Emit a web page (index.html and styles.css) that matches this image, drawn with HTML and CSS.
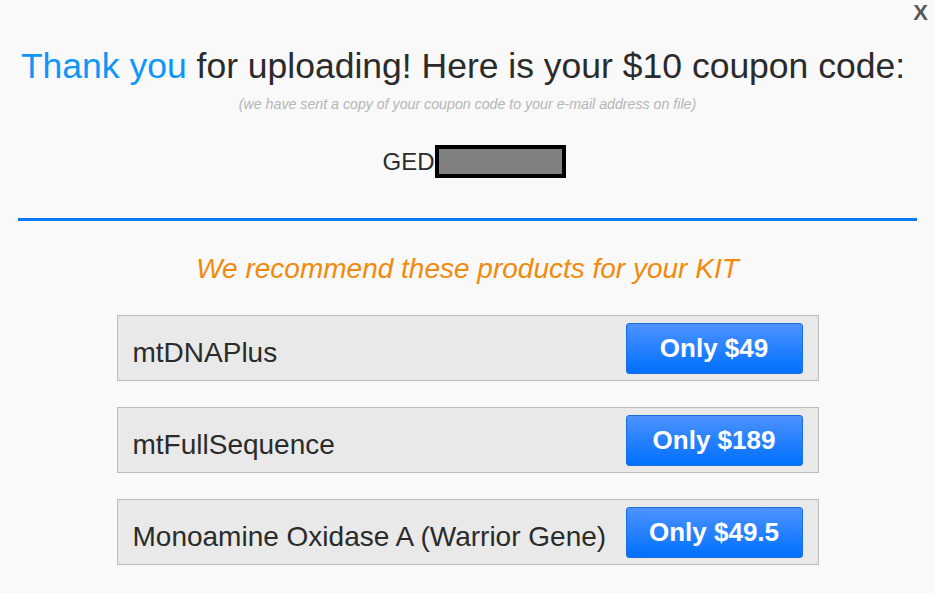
FILE: index.html
```html
<!DOCTYPE html>
<html lang="en">
<head>
    <meta charset="UTF-8">
    <title>Coupon code</title>
    <link rel="stylesheet" href="styles.css">
</head>
<body>

    <div class="popup">
        <a class="close" href="#">X</a>

        <div class="coupon">
            <h1><span class="thanks">Thank you</span> for uploading! Here is your $10 coupon code:</h1>
            <p class="note">(we have sent a copy of your coupon code to your e-mail address on file)</p>
            <div class="code">GED<span class="hidden-code"></span></div>
        </div>

        <div class="recommend">
            <h2>We recommend these products for your KIT</h2>
            <ul class="products">
                <li class="product"><span class="name">mtDNAPlus</span><a class="buy" href="#">Only $49</a></li>
                <li class="product"><span class="name">mtFullSequence</span><a class="buy" href="#">Only $189</a></li>
                <li class="product"><span class="name">Monoamine Oxidase A (Warrior Gene)</span><a class="buy" href="#">Only $49.5</a></li>
            </ul>
        </div>
    </div>

</body>
</html>
```

FILE: styles.css
```css
body {
    font-family: "Liberation Sans", Arial, sans-serif;
    background-color: #f9f9f9;
    margin: 0;
    color: #2b2b2b;
}
.popup {
    position: relative;
    width: 935px;
    height: 593px;
    overflow: hidden;
}
.close {
    position: absolute;
    top: 1px;
    right: 7px;
    font-size: 22px;
    line-height: 24px;
    font-weight: bold;
    color: #5a5a5a;
    text-decoration: none;
}
.coupon {
    margin: 0 18px;
    padding-top: 46px;
    height: 172px;
    border-bottom: 3px solid #0a78f5;
    text-align: center;
}
h1 {
    margin: 0 0 0 -9px;
    font-size: 35.5px;
    line-height: 40px;
    font-weight: normal;
    color: #2b2b2b;
}
.thanks {
    color: #0d96f8;
}
.note {
    margin: 10px 0 0;
    font-size: 14.2px;
    line-height: 16px;
    font-style: italic;
    color: #b5b5b5;
}
.code {
    margin: 33px 0 0 13px;
    font-size: 24px;
    color: #2b2b2b;
    display: inline-flex;
    align-items: center;
}
.hidden-code {
    display: inline-block;
    width: 123px;
    height: 25px;
    background-color: #808080;
    border: 4px solid #000;
}
.recommend {
    text-align: center;
    padding-top: 32px;
}
h2 {
    margin: 0;
    font-size: 28px;
    line-height: 32px;
    font-weight: normal;
    font-style: italic;
    color: #f28a0d;
}
.products {
    list-style-type: none;
    padding: 0;
    margin: 30px auto 0;
    width: 702px;
    display: flex;
    flex-direction: column;
    gap: 26px;
}
.product {
    display: flex;
    align-items: center;
    justify-content: space-between;
    height: 64px;
    padding: 0 15px 0 15px;
    background-color: #e9e9e9;
    border: 1px solid #bcbcbc;
}
.name {
    font-size: 28px;
    color: #2b2b2b;
    padding-top: 9px;
}
.buy {
    display: flex;
    align-items: center;
    justify-content: center;
    width: 175px;
    height: 49px;
    border: 1px solid #1a6fe0;
    border-radius: 3px;
    background: linear-gradient(#4d92ff, #0070ff);
    color: #fff;
    font-size: 26px;
    font-weight: bold;
    text-decoration: none;
}
```
